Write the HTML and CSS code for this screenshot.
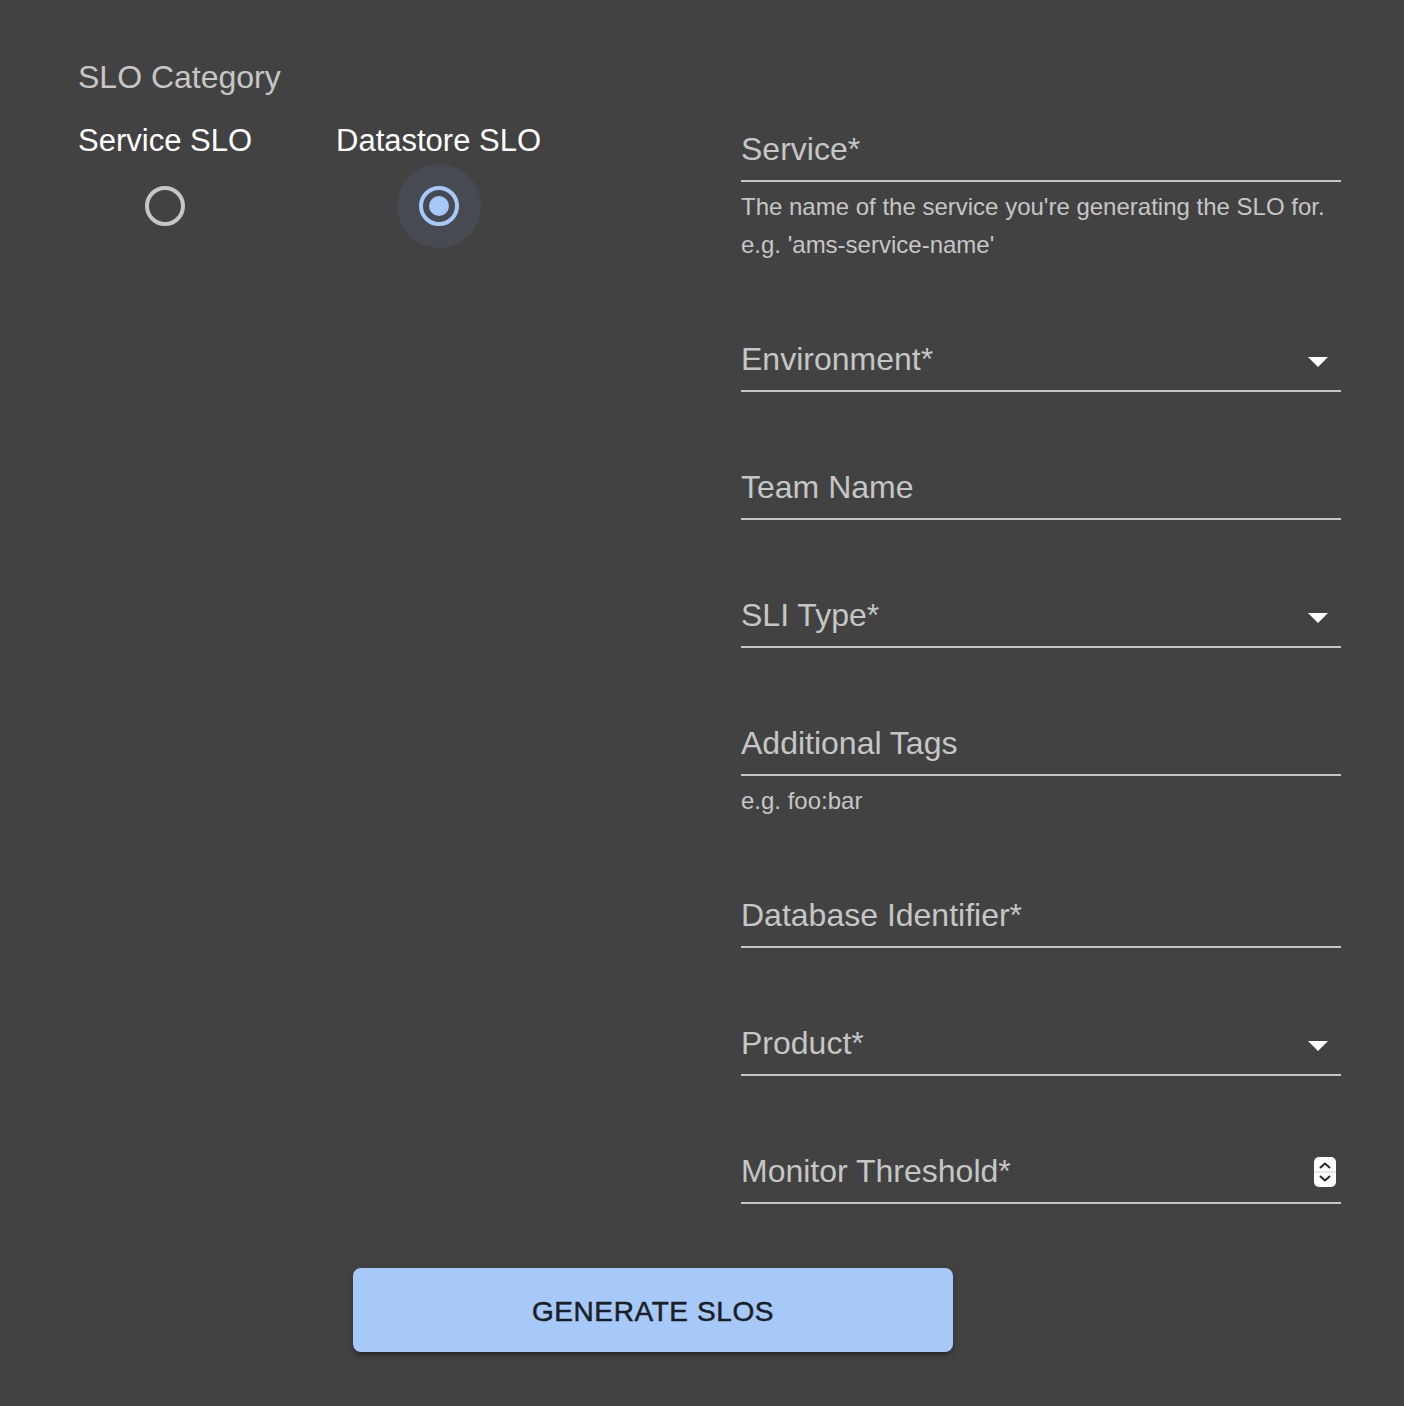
FILE: index.html
```html
<!DOCTYPE html>
<html lang="en">
<head>
<meta charset="utf-8">
<title>SLO Generator</title>
<link rel="stylesheet" href="styles.css">
</head>
<body>
<div class="page">
  <div class="main">
    <div class="left">
      <div class="group-label">SLO Category</div>
      <div class="radio-group">
        <label class="option">
          <span class="option-label">Service SLO</span>
          <span class="radio">
            <svg class="radio-icon" viewBox="0 0 24 24" width="48" height="48"><circle cx="12" cy="12" r="9" fill="none" stroke="#c6c6c6" stroke-width="2"/></svg>
          </span>
        </label>
        <label class="option">
          <span class="option-label">Datastore SLO</span>
          <span class="radio radio-checked">
            <svg class="radio-icon" viewBox="0 0 24 24" width="48" height="48"><circle cx="12" cy="12" r="9" fill="none" stroke="#a6c9fa" stroke-width="2"/><circle cx="12" cy="12" r="5" fill="#a6c9fa"/></svg>
          </span>
        </label>
      </div>
    </div>
    <div class="right">
      <div class="field">
        <div class="input-row"><span class="field-label">Service*</span></div>
        <div class="helper">The name of the service you're generating the SLO for.<br>e.g. 'ams-service-name'</div>
      </div>
      <div class="field">
        <div class="input-row"><span class="field-label">Environment*</span>
          <svg class="drop" viewBox="0 0 24 24" width="48" height="48"><path d="M7 10l5 5 5-5z" fill="#ffffff"/></svg>
        </div>
      </div>
      <div class="field">
        <div class="input-row"><span class="field-label">Team Name</span></div>
      </div>
      <div class="field">
        <div class="input-row"><span class="field-label">SLI Type*</span>
          <svg class="drop" viewBox="0 0 24 24" width="48" height="48"><path d="M7 10l5 5 5-5z" fill="#ffffff"/></svg>
        </div>
      </div>
      <div class="field">
        <div class="input-row"><span class="field-label">Additional Tags</span></div>
        <div class="helper">e.g. foo:bar</div>
      </div>
      <div class="field">
        <div class="input-row"><span class="field-label">Database Identifier*</span></div>
      </div>
      <div class="field">
        <div class="input-row"><span class="field-label">Product*</span>
          <svg class="drop" viewBox="0 0 24 24" width="48" height="48"><path d="M7 10l5 5 5-5z" fill="#ffffff"/></svg>
        </div>
      </div>
      <div class="field">
        <div class="input-row"><span class="field-label">Monitor Threshold*</span>
          <svg class="spinner" viewBox="0 0 22 30" width="22" height="30">
            <rect x="0" y="0" width="22" height="30" rx="5" fill="#ffffff"/>
            <line x1="0" y1="15" x2="22" y2="15" stroke="#d0d0d0" stroke-width="1"/>
            <path d="M6.5 10.5 L11 6.5 L15.5 10.5" fill="none" stroke="#2a2a2a" stroke-width="2" stroke-linecap="round" stroke-linejoin="round"/>
            <path d="M6.5 19.5 L11 23.5 L15.5 19.5" fill="none" stroke="#2a2a2a" stroke-width="2" stroke-linecap="round" stroke-linejoin="round"/>
          </svg>
        </div>
      </div>
    </div>
  </div>
  <div class="actions">
    <button class="generate" type="button">GENERATE SLOS</button>
  </div>
</div>
</body>
</html>
```
FILE: styles.css
```css
html, body {
  margin: 0;
  padding: 0;
  background: #424242;
}

body {
  font-family: "Liberation Sans", Arial, Helvetica, sans-serif;
  color: #ffffff;
  min-height: 1406px;
}

.page {
  padding-left: 78px;
}

.main {
  display: flex;
}

.left {
  width: 663px;
  padding-top: 61px;
}

.group-label {
  font-size: 32px;
  line-height: 32px;
  color: #c6c6c6;
}

.radio-group {
  display: flex;
  gap: 84px;
  margin-top: 23px;
}

.option {
  display: flex;
  flex-direction: column;
  align-items: center;
  cursor: pointer;
}

.option-label {
  font-size: 31px;
  line-height: 46px;
  padding-top: 2px;
  color: #ffffff;
}

.radio {
  width: 84px;
  height: 84px;
  border-radius: 50%;
  display: flex;
  align-items: center;
  justify-content: center;
}

.radio-checked {
  background: #474b51;
}

.radio-icon {
  display: block;
}

.right {
  width: 600px;
  padding-top: 86px;
  display: flex;
  flex-direction: column;
  gap: 32px;
}

.field {
  display: flex;
  flex-direction: column;
}

.input-row {
  height: 96px;
  box-sizing: border-box;
  padding-top: 44px;
  padding-bottom: 12px;
  border-bottom: 2px solid #c6c6c6;
  display: flex;
  align-items: center;
}

.field-label {
  flex: 1;
  font-size: 32px;
  line-height: 38px;
  color: #c6c6c6;
}

.drop {
  display: block;
  margin-right: -1px;
  margin-top: 4px;
}

.spinner {
  display: block;
  margin-right: 5px;
  margin-top: 2px;
}

.helper {
  margin-top: 6px;
  font-size: 24px;
  line-height: 38px;
  color: #c6c6c6;
}

.actions {
  margin-top: 64px;
  padding-left: 275px;
}

.generate {
  width: 600px;
  height: 84px;
  padding-top: 4px;
  border: none;
  border-radius: 8px;
  background: #a6c9fa;
  color: #1b1e23;
  font-family: "Liberation Sans", Arial, Helvetica, sans-serif;
  font-size: 28px;
  letter-spacing: 0.6px;
  -webkit-text-stroke: 0.5px #1b1e23;
  box-shadow: 0 6px 2px -4px rgba(0,0,0,0.2), 0 4px 4px 0 rgba(0,0,0,0.14), 0 2px 10px 0 rgba(0,0,0,0.12);
  cursor: pointer;
}
```
